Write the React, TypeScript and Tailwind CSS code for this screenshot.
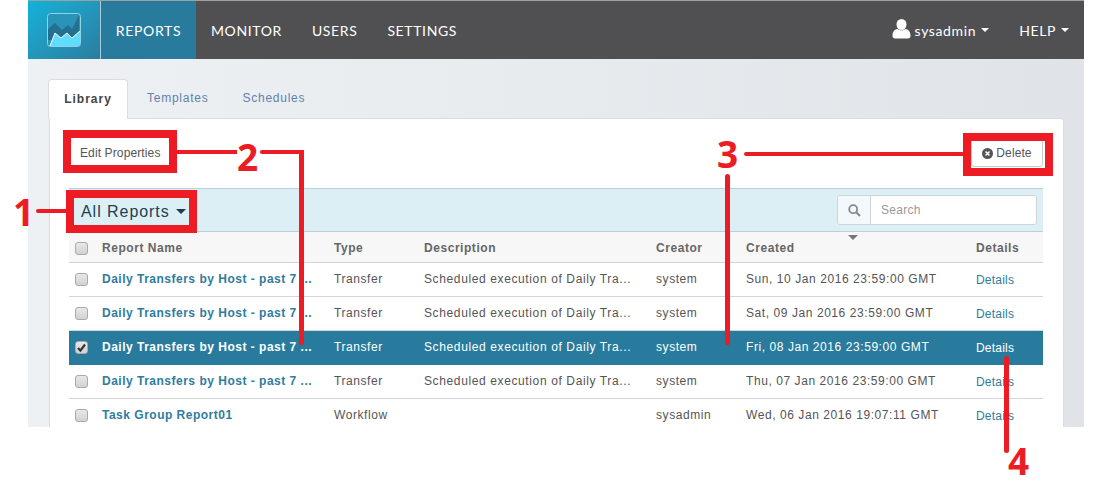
import React from "react";

const rows = [
  { name: "Daily Transfers by Host - past 7 ...", type: "Transfer", desc: "Scheduled execution of Daily Tra...", creator: "system", created: "Sun, 10 Jan 2016 23:59:00 GMT" },
  { name: "Daily Transfers by Host - past 7 ...", type: "Transfer", desc: "Scheduled execution of Daily Tra...", creator: "system", created: "Sat, 09 Jan 2016 23:59:00 GMT" },
  { name: "Daily Transfers by Host - past 7 ...", type: "Transfer", desc: "Scheduled execution of Daily Tra...", creator: "system", created: "Fri, 08 Jan 2016 23:59:00 GMT", selected: true },
  { name: "Daily Transfers by Host - past 7 ...", type: "Transfer", desc: "Scheduled execution of Daily Tra...", creator: "system", created: "Thu, 07 Jan 2016 23:59:00 GMT" },
  { name: "Task Group Report01", type: "Workflow", desc: "", creator: "sysadmin", created: "Wed, 06 Jan 2016 19:07:11 GMT" },
];

const cols = "grid grid-cols-[33px_232px_90px_232px_90px_230px_67px] items-center";

function Check({ checked }: { checked?: boolean }) {
  return (
    <div className="ml-[6px] w-[13px] h-[13px] rounded-[3px] border border-[#aaa] bg-gradient-to-b from-[#e8e8e8] to-[#d2d2d2] flex items-center justify-center">
      {checked && (
        <svg width="11" height="11" viewBox="0 0 11 11">
          <path d="M2 6l2.400 2.600L9 2.500" fill="none" stroke="#333" strokeWidth="2.200" />
        </svg>
      )}
    </div>
  );
}

function Logo() {
  return (
    <svg width="34" height="34" viewBox="0 0 34 34" className="block">
      <rect x="0.5" y="0.5" width="33" height="33" rx="3" fill="#2a93b8" stroke="#8fd3e6" />
      <path d="M1 16L8 10l7 7 6-5 4 4 7-14v16L25 25l-5-5-6 5-6-5-3 7-4 0z" fill="#24708f" />
      <path d="M3 33L8 20l6 5 6-5 5 5 8-7v14a1 1 0 0 1-1 1z" fill="#5fdcff" />
      <path d="M3 33L8 20l6 5 6-5 5 5 8-7" fill="none" stroke="#ffffff" strokeWidth="1" />
    </svg>
  );
}

function Caret({ color = "border-t-white" }: { color?: string }) {
  return <span className={`inline-block w-0 h-0 border-x-[4px] border-x-transparent border-t-[4px] ${color}`} />;
}

function Num({ n, className }: { n: string; className: string }) {
  return (
    <span className={`absolute font-['Open_Sans',sans-serif] font-bold text-[37px] leading-[40px] text-[#ed1c24] ${className}`}>{n}</span>
  );
}

export default function App() {
  return (
    <div className="relative w-[1117px] h-[494px] bg-white overflow-hidden font-['Liberation_Sans',sans-serif]">
      <div className="ml-[28px] w-[1056px] h-[427px] overflow-hidden flex flex-col border-t border-[#a0a0a0]">
        <header className="h-[58px] shrink-0 bg-[#505052] flex items-stretch font-['Lato',sans-serif] text-[14px] text-white">
          <div className="w-[73px] bg-gradient-to-br from-[#0fb2da] to-[#2a7d9e] flex items-center pl-[19px] border-r border-[#a8ccd9]">
            <Logo />
          </div>
          <div className="w-[95px] bg-[#297b9d] flex items-center justify-center tracking-[0.65px]">REPORTS</div>
          <div className="flex items-center pl-[15px] gap-[30px] tracking-[0.62px]">
            <span>MONITOR</span>
            <span>USERS</span>
            <span>SETTINGS</span>
          </div>
          <div className="ml-auto flex items-center pr-[15px] tracking-[0.62px]">
            <svg width="19" height="20" viewBox="0 0 19 20" className="mr-[4px] -mt-[3px]">
              <ellipse cx="9.500" cy="5.500" rx="5" ry="5.500" fill="#fff" />
              <path d="M0.500 17c0-5 2.500-6.500 5-7 2 1.800 6 1.800 8 0 2.500.5 5 2 5 7 0 1.500-1 2.500-2.500 2.500h-13C1.500 19.500.5 18.500.5 17z" fill="#fff" />
            </svg>
            <span>sysadmin</span>
            <span className="ml-[5px] mr-[30px] flex"><Caret /></span>
            <span>HELP</span>
            <span className="ml-[5px] flex"><Caret /></span>
          </div>
        </header>

        <main className="flex-1 bg-gradient-to-r from-[#eef1f4] to-[#e0e4e8] pl-[20px] pr-[20px] pt-[20px]">
          <nav className="flex h-[39px] items-stretch text-[12px] tracking-[0.75px]">
            <div className="w-[80px] pb-[2px] bg-white border border-b-0 border-[#dcdcdc] rounded-t-[4px] flex items-center justify-center font-bold text-[#444] tracking-[1px] relative z-10 -mb-px">Library</div>
            <div className="flex items-center pb-[2px] pl-[19px] text-[#5f82ad]">Templates</div>
            <div className="flex items-center pb-[2px] pl-[34px] text-[#5f82ad]">Schedules</div>
          </nav>
          <section className="bg-white border-t border-l border-r border-[#dcdcdc] rounded-tr-[4px] ml-px w-[1015px] h-[400px] pl-[19px] pr-[20px] pt-[20px]">
            <div className="flex justify-between h-[28px] mb-[21px] text-[12px] text-[#555]">
              <button className="h-[28px] px-[11px] bg-white tracking-[0.12px]">Edit Properties</button>
              <button className="h-[28px] w-[72px] bg-white border border-[#ccc] rounded-[3px] flex items-center justify-center gap-[3px] tracking-[0.1px]">
                <svg width="11" height="11" viewBox="0 0 11 11">
                  <circle cx="5.500" cy="5.500" r="5.500" fill="#555" />
                  <path d="M3.500 3.500l4 4M7.500 3.500l-4 4" stroke="#fff" strokeWidth="1.500" />
                </svg>
                Delete
              </button>
            </div>

            <div className="h-[44px] bg-[#dceff5] border-y border-[#b9d0da] flex items-center justify-between pl-[12px] pr-[6px]">
              <div className="flex items-center gap-[6px] pt-[3px] text-[16px] tracking-[0.95px] text-[#24404f]">
                All Reports
                <span className="inline-block w-0 h-0 border-x-[5px] border-x-transparent border-t-[5px] border-t-[#1f3a4c]" />
              </div>
              <div className="flex w-[200px] h-[30px] border border-[#ccd6da] rounded-[3px] text-[12px] overflow-hidden">
                <div className="w-[33px] bg-[#f3f9fb] border-r border-[#ccd6da] flex items-center justify-center">
                  <svg width="13" height="13" viewBox="0 0 13 13">
                    <circle cx="5.200" cy="5.200" r="4" fill="none" stroke="#888" strokeWidth="1.800" />
                    <path d="M8.200 8.200L12 12" stroke="#888" strokeWidth="2" />
                  </svg>
                </div>
                <div className="flex-1 bg-white flex items-center pl-[10px] text-[#999] tracking-[0.3px]">Search</div>
              </div>
            </div>

            <div className={`${cols} h-[31px] pt-[2px] bg-[#f7f7f7] border-b border-[#d4d4d4] text-[12px] font-bold text-[#666] tracking-[0.55px] relative`}>
              <Check />
              <span>Report Name</span>
              <span>Type</span>
              <span>Description</span>
              <span>Creator</span>
              <span>Created</span>
              <span>Details</span>
              <span className="absolute left-[779px] top-[3px] w-0 h-0 border-x-[5px] border-x-transparent border-t-[5px] border-t-[#777]" />
            </div>

            {rows.map((r, i) => (
              <div
                key={i}
                className={`${cols} h-[34px] border-b text-[12px] tracking-[0.57px] ${
                  r.selected ? "bg-[#297b9d] border-[#297b9d] text-white" : "bg-white border-[#d4d4d4] text-[#555]"
                }`}
              >
                <Check checked={r.selected} />
                <span className={`font-bold whitespace-nowrap tracking-[0.5px] -mt-[1px] ${r.selected ? "text-white" : "text-[#2f7c9e]"}`}>{r.name}</span>
                <span className="-mt-[1px]">{r.type}</span>
                <span className="whitespace-nowrap tracking-[0.62px] -mt-[1px]">{r.desc}</span>
                <span className="-mt-[1px]">{r.creator}</span>
                <span className="whitespace-nowrap -mt-[1px]">{r.created}</span>
                <span className={`tracking-[0.2px] ${r.selected ? "text-white" : "text-[#2f7c9e]"}`}>Details</span>
              </div>
            ))}
          </section>
        </main>
      </div>

      {/* Annotation overlay */}
      <div className="absolute left-[63px] top-[130px] w-[114px] h-[43px] border-[8px] border-[#ed1c24]" />
      <div className="absolute left-[66px] top-[190px] w-[131px] h-[43px] border-[8px] border-[#ed1c24]" />
      <div className="absolute left-[963px] top-[133px] w-[90px] h-[43px] border-[8px] border-[#ed1c24]" />

      <div className="absolute left-[36px] top-[209px] w-[30px] h-[4px] rounded-l-full bg-[#ed1c24]" />
      <div className="absolute left-[177px] top-[150px] w-[60px] h-[4px] bg-[#ed1c24]" />
      <div className="absolute left-[260px] top-[150px] w-[44px] h-[4px] rounded-l-full bg-[#ed1c24]" />
      <div className="absolute left-[299px] top-[150px] w-[5px] h-[195px] rounded-b-full bg-[#ed1c24]" />
      <div className="absolute left-[744px] top-[152px] w-[219px] h-[4px] rounded-l-full bg-[#ed1c24]" />
      <div className="absolute left-[725px] top-[174px] w-[5px] h-[171px] rounded-full bg-[#ed1c24]" />
      <div className="absolute left-[1004px] top-[356px] w-[5px] h-[97px] rounded-full bg-[#ed1c24]" />

      <Num n="1" className="left-[13px] top-[192px]" />
      <Num n="2" className="left-[237px] top-[137px]" />
      <Num n="3" className="left-[717px] top-[134px]" />
      <Num n="4" className="left-[1008px] top-[441px]" />
    </div>
  );
}
